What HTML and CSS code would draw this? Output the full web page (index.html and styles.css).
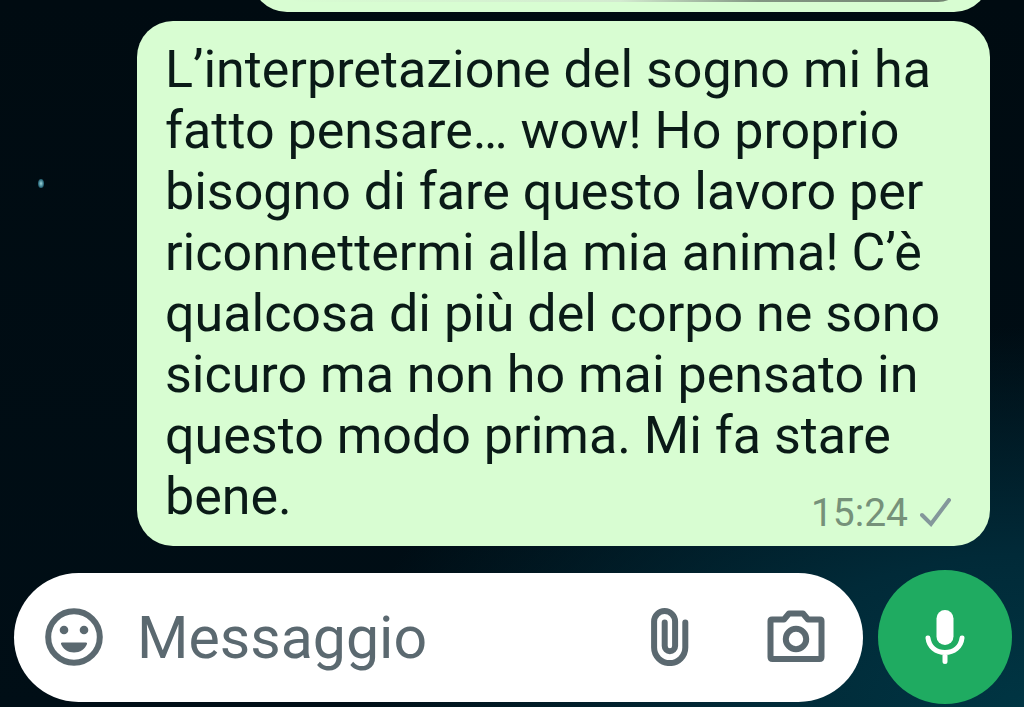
FILE: index.html
```html
<!DOCTYPE html>
<html lang="it">
<head>
<meta charset="utf-8">
<meta name="viewport" content="width=device-width, initial-scale=1">
<title>Chat</title>
<link rel="stylesheet" href="styles.css">
</head>
<body>
<main class="chat">
  <div class="star"></div>
  <section class="messages">
    <div class="previous">
      <div class="bubble bubble-photo"><div class="photo"></div></div>
    </div>
    <article class="bubble bubble-text">
      <p class="text">L’interpretazione del sogno mi ha<br>fatto pensare… wow! Ho proprio<br>bisogno di fare questo lavoro per<br>riconnettermi alla mia anima! C’è<br>qualcosa di più del corpo ne sono<br>sicuro ma non ho mai pensato in<br>questo modo prima. Mi fa stare<br>bene.</p>
      <div class="meta">
        <time datetime="15:24">15:24</time>
        <svg class="tick" viewBox="0 0 32 30" aria-label="Inviato"><path d="M2 17 L11 26 L29 2"/></svg>
      </div>
    </article>
  </section>
  <form class="composer">
    <div class="field">
      <button type="button" class="icon-button" aria-label="Emoji">
        <svg class="icon" viewBox="0 0 58 58"><circle class="line" cx="29" cy="29" r="25.8"/><circle cx="19" cy="22" r="4.3"/><circle cx="39" cy="22" r="4.3"/><path d="M17 34.500H41Q42.500 34.500 42 36C40 41 35 44.500 29 44.500S18 41 16 36Q15.500 34.500 17 34.500Z"/></svg>
      </button>
      <input class="input" type="text" placeholder="Messaggio" aria-label="Messaggio">
      <button type="button" class="icon-button" aria-label="Allega">
        <svg class="icon" viewBox="0 0 58 58"><path class="line clip" d="M44.300 14.500V39.500A15.600 15.600 0 0 1 13.100 39.500V13.500A10.500 10.500 0 0 1 34.100 13.500V38A5.200 5.200 0 0 1 23.700 38V14.500"/></svg>
      </button>
      <button type="button" class="icon-button camera" aria-label="Fotocamera">
        <svg class="icon" viewBox="0 0 58 58"><path class="line camera-line" d="M5 11.500H17L22 5.500H36L41 11.500H53Q54.500 11.500 54.500 13V49Q54.500 51 52.500 51H5.500Q3.500 51 3.500 49V13Q3.500 11.500 5 11.500Z"/><circle class="line camera-line" cx="29" cy="31" r="10.200"/></svg>
      </button>
    </div>
    <button type="button" class="mic" aria-label="Messaggio vocale">
      <svg class="mic-icon" viewBox="0 0 40 56"><rect x="11.500" y="1" width="17" height="35" rx="8.500"/><path class="mic-line" d="M3 29C4 38 11 43.500 20 43.500S36 38 37 29M20 43.500V52.500"/></svg>
    </button>
  </form>
</main>
</body>
</html>
```
FILE: styles.css
```css
* {
  box-sizing: border-box;
}

body {
  margin: 0;
  font-family: Roboto, "Liberation Sans", sans-serif;
  background: #000b12;
}

.chat {
  position: relative;
  display: flex;
  flex-direction: column;
  gap: 24px;
  min-height: 100vh;
  overflow: hidden;
  background:
    radial-gradient(ellipse 680px 380px at 100% 100%, #003543 0%, #012a38 40%, rgba(0, 20, 30, 0) 100%),
    linear-gradient(#000b11, #000e16);
}

.star {
  position: absolute;
  left: 38px;
  top: 179px;
  width: 6px;
  height: 9px;
  border-radius: 50%;
  background: radial-gradient(#9ed8de, #2c6b7c 60%, #05202b);
}

.messages {
  display: flex;
  flex-direction: column;
  gap: 9px;
  padding-right: 34px;
  padding-left: 137px;
}

.bubble {
  background: #d8fdd2;
  border-radius: 36px;
}

.previous {
  display: flex;
  align-items: flex-end;
  height: 12px;
  margin-left: 114px;
  overflow: hidden;
}

.bubble-photo {
  flex: 1;
  flex-shrink: 0;
  height: 100px;
  padding: 0 24px 10px;
}

.photo {
  height: 90px;
  border-radius: 28px;
  background: linear-gradient(90deg, #d8fdd2 0%, #d3ead0 50%, #839683 70%, #71836f 100%);
}

.bubble-text {
  padding: 18px 30px 11px 28px;
}

.text {
  margin: 0;
  color: #0a1a17;
  font-size: 52px;
  line-height: 61px;
  white-space: nowrap;
}

.meta {
  display: flex;
  justify-content: flex-end;
  align-items: center;
  gap: 12px;
  height: 44px;
  margin-top: -36px;
  padding-right: 8px;
  color: #76917a;
  font-size: 39px;
  line-height: 44px;
}

.tick {
  width: 32px;
  height: 30px;
  fill: none;
  stroke: #84979b;
  stroke-width: 4;
  stroke-linecap: round;
}

.composer {
  display: flex;
  align-items: center;
  gap: 15px;
  padding: 0 12px 0 14px;
}

.field {
  display: flex;
  flex: 1;
  align-items: center;
  min-width: 0;
  height: 129px;
  padding: 0 38px 0 31px;
  background: #fff;
  border-radius: 65px;
}

.icon-button {
  flex: none;
  padding: 0;
  border: 0;
  background: none;
  color: #5b6970;
}

.icon {
  display: block;
  width: 58px;
  height: 58px;
  fill: currentColor;
}

.line {
  fill: none;
  stroke: currentColor;
  stroke-width: 6;
  stroke-linecap: round;
  stroke-linejoin: round;
}

.camera {
  margin-left: 68px;
}

.input {
  flex: 1;
  min-width: 0;
  height: 80px;
  margin-left: 34px;
  padding: 0;
  border: 0;
  outline: 0;
  background: none;
  color: #0a1a17;
  font: 59px Roboto, "Liberation Sans", sans-serif;
}

.input::placeholder {
  color: #5b6970;
  opacity: 1;
}

.mic {
  display: flex;
  flex: none;
  align-items: center;
  justify-content: center;
  width: 134px;
  height: 134px;
  padding: 0;
  border: 0;
  border-radius: 50%;
  background: #1fab61;
}

.mic-icon {
  width: 40px;
  height: 56px;
  fill: #fff;
}

.mic-line {
  fill: none;
  stroke: #fff;
  stroke-width: 5;
  stroke-linecap: round;
}
```
